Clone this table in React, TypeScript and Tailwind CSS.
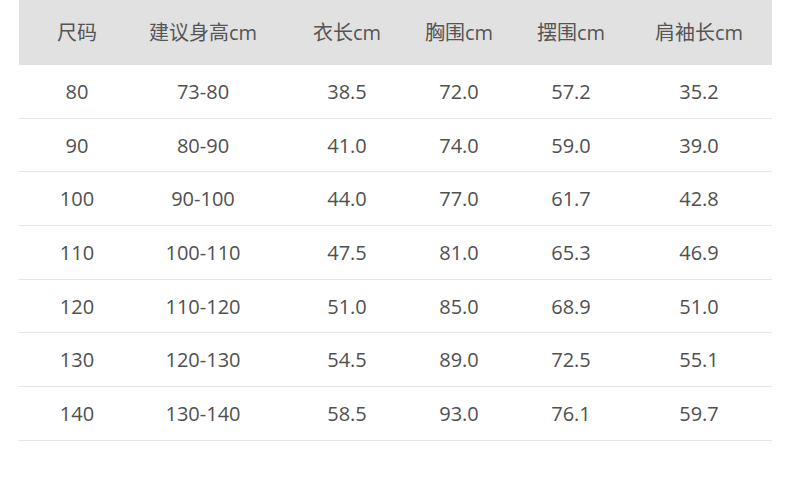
const headers = ["尺码", "建议身高cm", "衣长cm", "胸围cm", "摆围cm", "肩袖长cm"];

const rows = [
  ["80", "73-80", "38.5", "72.0", "57.2", "35.2"],
  ["90", "80-90", "41.0", "74.0", "59.0", "39.0"],
  ["100", "90-100", "44.0", "77.0", "61.7", "42.8"],
  ["110", "100-110", "47.5", "81.0", "65.3", "46.9"],
  ["120", "110-120", "51.0", "85.0", "68.9", "51.0"],
  ["130", "120-130", "54.5", "89.0", "72.5", "55.1"],
  ["140", "130-140", "58.5", "93.0", "76.1", "59.7"],
];

// column widths chosen so each column's centre sits where the picture has it
const cols = "grid grid-cols-[116px_136px_152px_72px_152px_104px_21px]";

export default function App() {
  return (
    <div
      className="w-[790px] h-[485px] bg-white pl-[19px] pr-[18px]"
      style={{ fontFamily: '"Open Sans", "Noto Sans CJK SC", sans-serif' }}
    >
      <div className={`${cols} h-[65px] items-center bg-[#e1e1e1] text-[20px] text-[#555]`}>
        {headers.map((h) => (
          <div key={h} className="text-center leading-none pt-[1px]">
            {h}
          </div>
        ))}
      </div>
      {rows.map((r, i) => (
        <div
          key={i}
          className={`${cols} h-[53.7px] items-center border-b border-[#e6e6e6] text-[20px] text-[#505050]`}
        >
          {r.map((c, j) => (
            <div key={j} className="text-center leading-none pt-[1px]">
              {c}
            </div>
          ))}
        </div>
      ))}
    </div>
  );
}
